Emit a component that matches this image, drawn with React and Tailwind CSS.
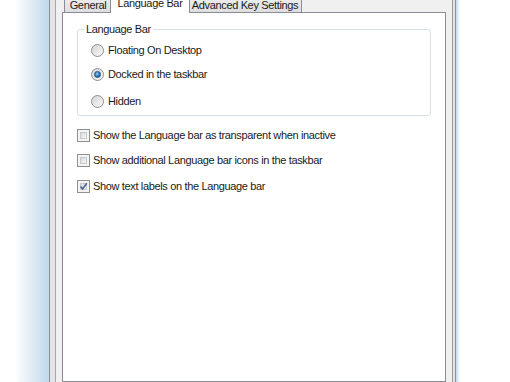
import React from "react";

const Radio = ({ checked }) => (
  <span className="w-[13px] h-[13px] rounded-full border border-[#8e8f8f] bg-gradient-to-br from-[#d4d4d4] to-[#fafafa] flex items-center justify-center shrink-0">
    {checked && (
      <span className="w-[7px] h-[7px] rounded-full border border-[#1d4f7c] bg-[radial-gradient(circle_at_40%_35%,#8fd0fa,#2a6fae_60%,#174a78)]" />
    )}
  </span>
);

const Checkbox = ({ checked }) => (
  <span className="w-[13px] h-[13px] border border-[#8e8f8f] bg-[#f4f4f4] p-[2px] shrink-0 relative">
    <span className="block w-full h-full border border-[#c9c9c9] bg-gradient-to-br from-[#d9d9d9] to-[#f7f7f7]" />
    {checked && (
      <svg className="absolute left-[1px] top-[1px]" width="9" height="9" viewBox="0 0 9 9">
        <path d="M1.5 4.5 L3.6 7 L7.8 1.2" fill="none" stroke="#4a5f97" strokeWidth="1.6" />
      </svg>
    )}
  </span>
);

const Row = ({ children, className }) => (
  <div className={"flex items-center h-[13px] " + className}>{children}</div>
);

export default function App() {
  return (
    <div className="w-[510px] h-[382px] bg-white flex overflow-hidden font-['Liberation_Sans',Arial,sans-serif] text-[11px] tracking-[-0.35px] text-[#1a1a1a]">
      {/* left window glow and frame */}
      <div className="w-[49px] bg-gradient-to-r from-white from-30% to-[#c0d8ec]" />
      <div className="w-px bg-[#8a939c]" />
      <div className="w-[5px] bg-[#e3e3e3]" />
      <div className="w-px bg-[#a6a6a6]" />

      {/* dialog */}
      <div className="w-[396px] bg-[#f0f0f0] flex flex-col px-[6px]">
        {/* tabs */}
        <div className="h-[12px] flex items-end relative z-10">
          <div className="ml-[2px] w-[48px] h-[20px] border border-b-0 border-[#898c95] bg-gradient-to-b from-[#f2f2f2] to-[#dedede] flex items-end justify-center pb-[1px] leading-[12px]">
            General
          </div>
          <div className="-ml-[2px] w-[80px] h-[22px] -mb-px border border-b-0 border-[#898c95] bg-white flex items-end justify-center pb-[4px] leading-[12px] relative z-10">
            Language Bar
          </div>
          <div className="-ml-[2px] w-[114px] h-[20px] border border-b-0 border-[#898c95] bg-gradient-to-b from-[#f2f2f2] to-[#dedede] flex items-end justify-center pb-[1px] leading-[12px]">
            Advanced Key Settings
          </div>
        </div>

        {/* tab panel */}
        <div className="flex-1 border border-[#898c95] bg-white px-[14px] flex flex-col">
          <fieldset className="mt-[10px] border border-[#d5dfe5] rounded-[3px] pb-[7px]">
            <legend className="ml-[6px] px-[2px] leading-[13px]">Language Bar</legend>
            <Row className="mt-[8px] ml-[13px] gap-[4px]">
              <Radio />
              <span>Floating On Desktop</span>
            </Row>
            <Row className="mt-[11px] ml-[13px] gap-[4px]">
              <Radio checked />
              <span>Docked in the taskbar</span>
            </Row>
            <Row className="mt-[14px] ml-[13px] gap-[4px]">
              <Radio />
              <span>Hidden</span>
            </Row>
          </fieldset>

          <Row className="mt-[13px] gap-[3px]">
            <Checkbox />
            <span>Show the Language bar as transparent when inactive</span>
          </Row>
          <Row className="mt-[12px] gap-[3px]">
            <Checkbox />
            <span>Show additional Language bar icons in the taskbar</span>
          </Row>
          <Row className="mt-[13px] gap-[3px]">
            <Checkbox checked />
            <span>Show text labels on the Language bar</span>
          </Row>
        </div>
      </div>

      {/* right frame and glow */}
      <div className="w-px bg-[#9a9a9a]" />
      <div className="w-[2px] bg-[#e3e3e3]" />
      <div className="w-px bg-[#8a939c]" />
      <div className="w-[4px] bg-gradient-to-r from-[#c0d8ec] to-white" />
      <div className="flex-1" />
    </div>
  );
}
